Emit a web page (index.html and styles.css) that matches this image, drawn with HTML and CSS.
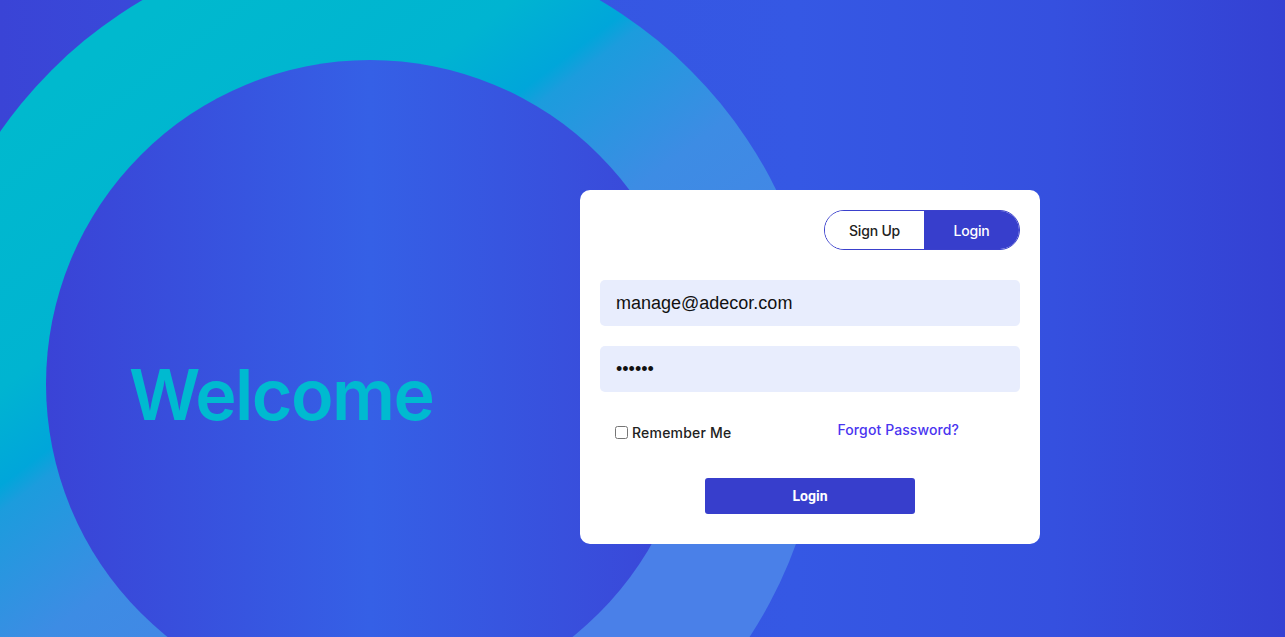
FILE: index.html
```html
<!DOCTYPE html>
<html lang="en">
<head>
<meta charset="utf-8">
<title>Login</title>
<link rel="stylesheet" href="styles.css">
</head>
<body>
<div class="page">
  <svg class="backdrop" width="1285" height="637" viewBox="0 0 1285 637" aria-hidden="true">
    <defs>
      <linearGradient id="ringGrad" gradientUnits="userSpaceOnUse" x1="60" y1="80" x2="483" y2="638">
        <stop offset="0" stop-color="#00b9ce"/>
        <stop offset="0.30" stop-color="#00b4d1"/>
        <stop offset="0.41" stop-color="#00a6da"/>
        <stop offset="0.44" stop-color="#1c9cdd"/>
        <stop offset="0.62" stop-color="#3d8ce4"/>
        <stop offset="1" stop-color="#4a80e8"/>
      </linearGradient>
      <linearGradient id="innerGrad" x1="0" y1="0" x2="1" y2="0">
        <stop offset="0" stop-color="#3a43d6"/>
        <stop offset="0.5" stop-color="#3560e6"/>
        <stop offset="1" stop-color="#3a45d7"/>
      </linearGradient>
    </defs>
    <circle cx="371" cy="390" r="452" fill="url(#ringGrad)"/>
    <circle cx="370" cy="384" r="324" fill="url(#innerGrad)"/>
  </svg>

  <main class="content">
    <section class="intro">
      <h1 class="welcome">Welcome</h1>
    </section>

    <section class="card">
      <div class="tabs">
        <div class="toggle">
          <button class="tab" type="button">Sign Up</button>
          <button class="tab tab-active" type="button">Login</button>
        </div>
      </div>
      <form class="form">
        <input class="field" type="email" value="manage@adecor.com">
        <input class="field field-pass" type="password" value="123456">
        <div class="options">
          <label class="remember"><input class="check" type="checkbox"><span>Remember Me</span></label>
          <a class="forgot" href="#">Forgot Password?</a>
        </div>
        <button class="submit" type="button">Login</button>
      </form>
    </section>
  </main>
</div>
</body>
</html>
```

FILE: styles.css
```css
* {
  box-sizing: border-box;
}

html, body {
  margin: 0;
  padding: 0;
}

body {
  font-family: Inter, "Noto Sans", sans-serif;
}

.page {
  position: relative;
  width: 1285px;
  height: 637px;
  overflow: hidden;
  background: linear-gradient(90deg, #3a44d6 0%, #3656e2 40%, #3558e4 62%, #3550df 82%, #3441d3 100%);
}

.backdrop {
  position: absolute;
  left: 0;
  top: 0;
  display: block;
}

.content {
  position: relative;
  display: flex;
  align-items: flex-start;
  padding-top: 190px;
}

.intro {
  width: 580px;
  padding-left: 129px;
}

.welcome {
  margin: 170px 0 0;
  font-family: Inter, sans-serif;
  font-weight: 600;
  font-size: 70px;
  line-height: 1;
  letter-spacing: -1.6px;
  color: #00bad0;
}

.card {
  width: 460px;
  background: #ffffff;
  border-radius: 10px;
  padding: 20px 20px 30px;
}

.tabs {
  display: flex;
  justify-content: flex-end;
}

.toggle {
  display: flex;
  width: 196px;
  height: 40px;
  border: 1px solid #3a40cc;
  border-radius: 20px;
  overflow: hidden;
}

.tab {
  border: 0;
  margin: 0;
  padding: 0;
  background: #ffffff;
  font-family: Inter, sans-serif;
  font-size: 14px;
  font-weight: 500;
  color: #222222;
  letter-spacing: -0.2px;
  cursor: pointer;
}

.tab:first-child {
  width: 99px;
}

.tab-active {
  flex: 1;
  background: #373ecc;
  color: #ffffff;
}

.form {
  display: flex;
  flex-direction: column;
  margin: 30px 0 0;
}

.field {
  width: 100%;
  height: 46px;
  border: 0;
  border-radius: 5px;
  background: #e8edfd;
  padding: 0 16px;
  font-family: "Liberation Sans", Arial, sans-serif;
  font-size: 18px;
  color: #111111;
  outline: none;
}

.field-pass {
  margin-top: 20px;
}

.options {
  display: flex;
  align-items: center;
  height: 20px;
  margin-top: 30px;
  padding-left: 15px;
}

.remember {
  display: flex;
  align-items: center;
  font-family: Inter, sans-serif;
  font-size: 14px;
  font-weight: 500;
  color: #222222;
  letter-spacing: 0.2px;
}

.check {
  width: 13px;
  height: 13px;
  margin: 0 4px 0 0;
}

.forgot {
  margin-left: auto;
  margin-right: 61px;
  margin-bottom: 5px;
  font-family: Inter, sans-serif;
  font-size: 14px;
  font-weight: 500;
  color: #4a35f0;
  text-decoration: none;
  letter-spacing: 0.1px;
}

.submit {
  align-self: center;
  width: 210px;
  height: 36px;
  margin-top: 36px;
  border: 0;
  border-radius: 3px;
  background: #373ecc;
  color: #ffffff;
  font-family: Roboto, "Liberation Sans", sans-serif;
  font-size: 14px;
  font-weight: 700;
  cursor: pointer;
}
```
